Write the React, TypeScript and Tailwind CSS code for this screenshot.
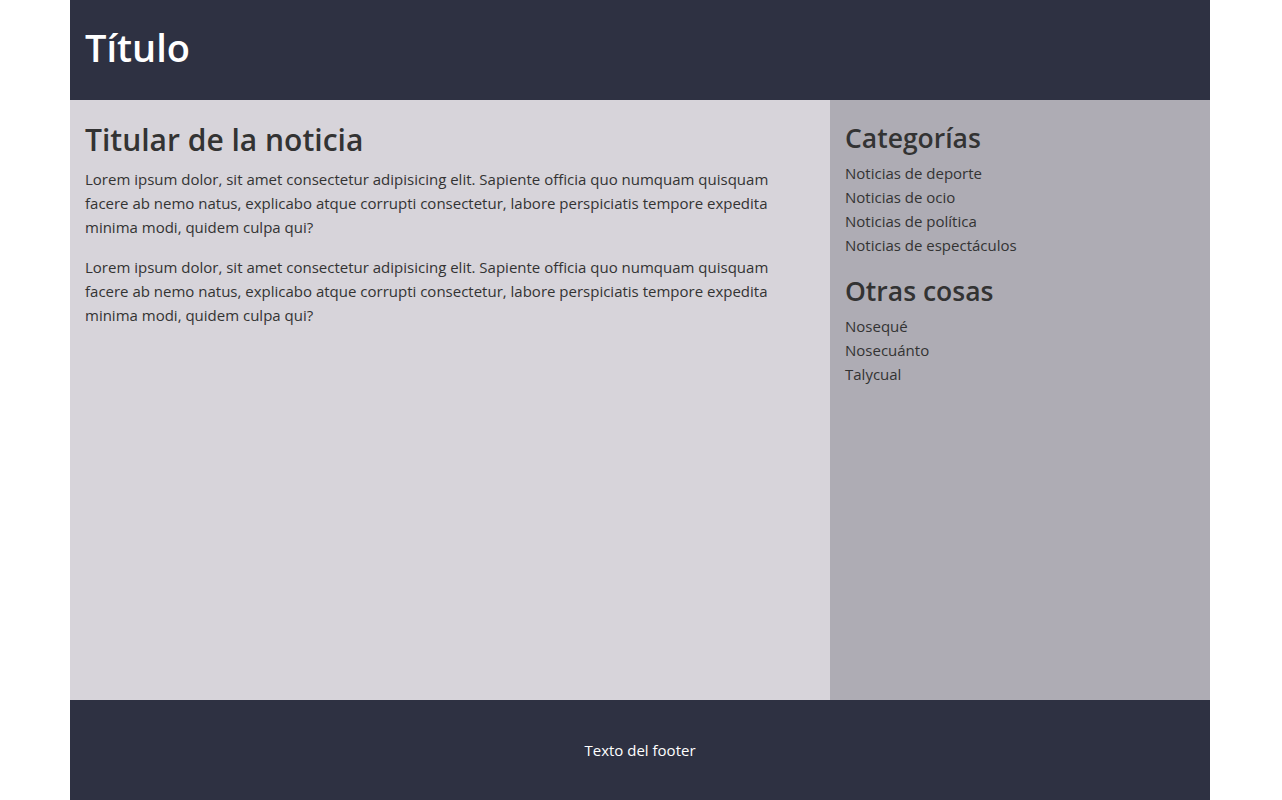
export default function App() {
  const categorias = ["Noticias de deporte", "Noticias de ocio", "Noticias de política", "Noticias de espectáculos"];
  const otras = ["Nosequé", "Nosecuánto", "Talycual"];
  const lorem =
    "Lorem ipsum dolor, sit amet consectetur adipisicing elit. Sapiente officia quo numquam quisquam facere ab nemo natus, explicabo atque corrupti consectetur, labore perspiciatis tempore expedita minima modi, quidem culpa qui?";

  return (
    <div className="min-h-screen bg-white font-['Open_Sans',sans-serif] text-[#333]">
      <div className="ml-[70px] flex w-[1140px] flex-col">
        <header className="flex h-[100px] items-center bg-[#2e3142] px-[15px] pb-1.5">
          <h1 className="text-[38px] font-semibold leading-[46px] text-white">Título</h1>
        </header>

        <div className="flex h-[600px]">
          <main className="w-[760px] bg-[#d7d4da] px-[15px] pt-[21px]">
            <h2 className="mb-2 text-[30px] font-semibold leading-[38px]">Titular de la noticia</h2>
            <p className="mb-4 w-[700px] text-[15px] leading-6">{lorem}</p>
            <p className="mb-4 w-[700px] text-[15px] leading-6">{lorem}</p>
          </main>

          <aside className="w-[380px] bg-[#aeacb4] px-[15px] pt-[21px]">
            <h3 className="mb-1.5 text-[26.5px] font-semibold leading-[34px]">Categorías</h3>
            <ul className="mb-[17px] text-[15px] leading-6">
              {categorias.map((c) => (
                <li key={c}>{c}</li>
              ))}
            </ul>
            <h3 className="mb-1.5 text-[26.5px] font-semibold leading-[34px]">Otras cosas</h3>
            <ul className="text-[15px] leading-6">
              {otras.map((c) => (
                <li key={c}>{c}</li>
              ))}
            </ul>
          </aside>
        </div>

        <footer className="flex h-[100px] items-center justify-center bg-[#2e3142]">
          <p className="text-[15px] text-white">Texto del footer</p>
        </footer>
      </div>
    </div>
  );
}
